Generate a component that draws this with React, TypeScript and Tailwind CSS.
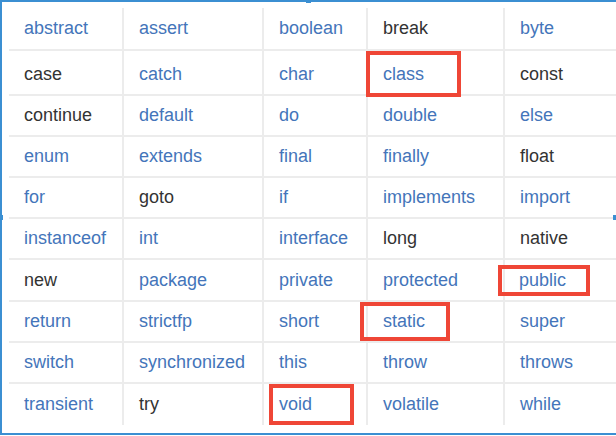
const rows: string[][] = [
  ['abstract', 'assert', 'boolean', 'break', 'byte'],
  ['case', 'catch', 'char', 'class', 'const'],
  ['continue', 'default', 'do', 'double', 'else'],
  ['enum', 'extends', 'final', 'finally', 'float'],
  ['for', 'goto', 'if', 'implements', 'import'],
  ['instanceof', 'int', 'interface', 'long', 'native'],
  ['new', 'package', 'private', 'protected', 'public'],
  ['return', 'strictfp', 'short', 'static', 'super'],
  ['switch', 'synchronized', 'this', 'throw', 'throws'],
  ['transient', 'try', 'void', 'volatile', 'while'],
]

// words shown in dark text, the rest are links
const plain = new Set(['case', 'continue', 'break', 'const', 'float', 'goto', 'long', 'native', 'new', 'try'])

// red boxes drawn around some keywords
const marked: Record<string, string> = {
  class: '-ml-[2px] w-[95px] h-[46px] pl-[13px]',
  public: '-ml-[7px] w-[92px] h-[31px] pl-[17px]',
  static: '-ml-[8px] w-[90px] h-[39px] pl-[19px]',
  void: 'ml-[5px] w-[85px] h-[41px] pl-[6px]',
}

const rowHeights = ['h-[43px]', 'h-[45px]', 'h-[41px]', 'h-[41px]', 'h-[41px]', 'h-[41px]', 'h-[42px]', 'h-[41px]', 'h-[41px]', 'h-[40px]']

export default function App() {
  return (
    <div className="relative w-[616px] h-[436px] bg-white overflow-hidden" style={{ fontFamily: '"Liberation Sans", Arial, sans-serif' }}>
      <div className="h-[435px] border-t-2 border-l-2 border-b-2 border-[#3b8fd2] pl-[7px] pt-[6px]">
        <div className="flex flex-col">
          {rows.map((row, i) => (
            <div
              key={i}
              className={`grid grid-cols-[113px_140px_104px_137px_1fr] ${rowHeights[i]} ${i < rows.length - 1 ? 'border-b-2 border-[#ececec]' : ''}`}
            >
              {row.map((word, j) => (
                <div
                  key={word}
                  className={`flex items-center text-[18px] ${marked[word] ? '' : 'pl-[15px]'} ${j > 0 ? 'border-l-2 border-[#ececec]' : ''} ${
                    plain.has(word) ? 'text-[#333333]' : 'text-[#4475ba]'
                  }`}
                >
                  {marked[word] ? (
                    <div className={`relative z-10 flex shrink-0 items-center border-4 border-[#ef4636] ${marked[word]}`}>{word}</div>
                  ) : (
                    word
                  )}
                </div>
              ))}
            </div>
          ))}
        </div>
      </div>

      {/* selection handles */}
      <div className="absolute left-0 top-[215px] w-[3px] h-[5px] bg-[#3b8fd2]" />
      <div className="absolute right-0 top-[215px] w-[3px] h-[5px] bg-[#3b8fd2]" />
      <div className="absolute left-[306px] top-0 w-[5px] h-[3px] bg-[#3b8fd2]" />
    </div>
  )
}
